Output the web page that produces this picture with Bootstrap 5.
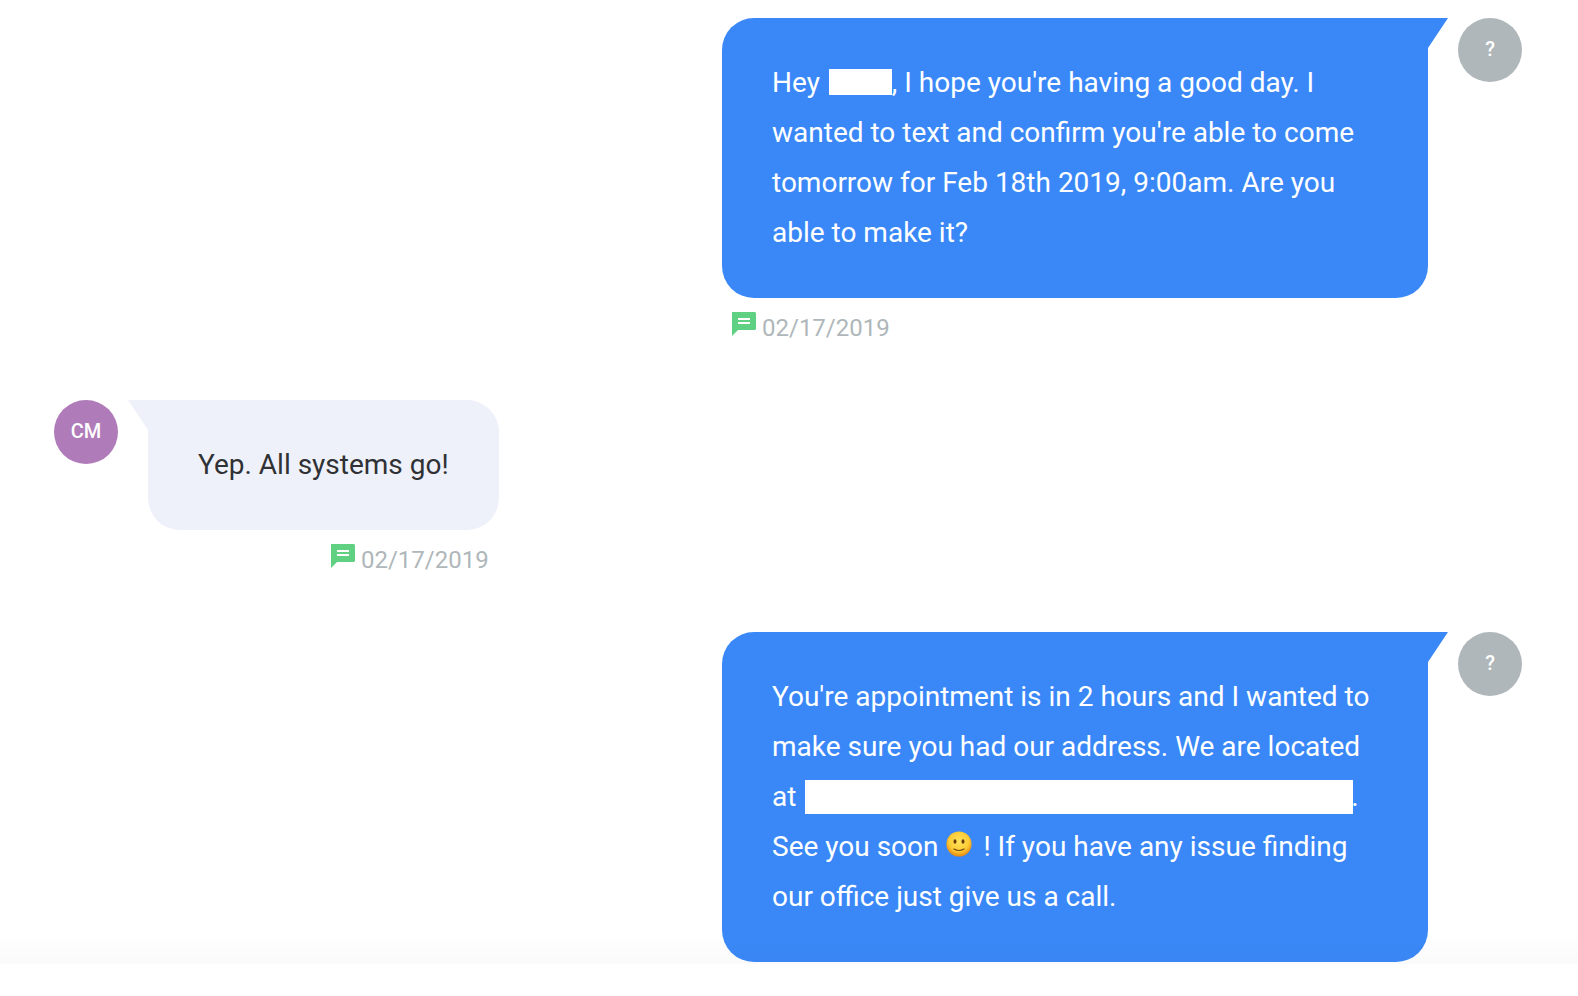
<!DOCTYPE html>
<html lang="en">
<head>
<meta charset="utf-8">
<meta name="viewport" content="width=device-width, initial-scale=1">
<title>Conversation</title>
<link href="https://cdn.jsdelivr.net/npm/bootstrap@5.3.0/dist/css/bootstrap.min.css" rel="stylesheet">
<style>
  body { font-family: Roboto, "Liberation Sans", sans-serif; background: #fff; color: #303135; }
  .thread { position: relative; padding: 18px 56px 0 54px; gap: 52px; min-height: 0; }
  /* faint shade where the thread meets the bottom edge */
  .thread::after { content: ""; position: absolute; left: 0; right: 0; bottom: 0; height: 32px; background: linear-gradient(rgba(0,0,0,0), rgba(0,0,0,.02)); }
  .thread-foot { height: 32px; }
  .message { gap: 30px; }
  .message-body { max-width: calc(50% - 28px); }
  .bubble { position: relative; padding: 40px 50px; font-size: 28px; line-height: 50px; border-radius: 32px; }
  .bubble::before { content: ""; position: absolute; top: 0; width: 20px; height: 30px; }
  .bubble-sent { background: #3a88f8; color: #fff; border-top-right-radius: 0; }
  .bubble-sent::before { left: 100%; background: #3a88f8; clip-path: polygon(0 0, 100% 0, 0 100%); }
  .bubble-received { background: #eef1f9; border-top-left-radius: 0; }
  .bubble-received::before { right: 100%; background: #eef1f9; clip-path: polygon(0 0, 100% 0, 100% 100%); }
  .avatar { width: 64px; height: 64px; padding-bottom: 2px; font-size: 20px; line-height: 24px; font-weight: 500; color: #fff; }
  .avatar-unknown { background: #afb7ba; }
  .avatar-cm { background: #b07bb9; }
  .meta { margin-top: 10px; padding: 0 10px; gap: 6px; font-size: 24px; line-height: 40px; color: #afb7ba; }
  .meta svg { margin-top: 4px; }
  .redacted { display: inline-block; background: #fff; margin-left: 2px; }
  .redacted-name { width: 63px; height: 26px; vertical-align: -3px; }
  .redacted-address { width: 548px; height: 34px; margin-right: -2px; vertical-align: -8px; }
  .emoji { display: inline-block; vertical-align: -1px; margin: 0 4px 0 1px; }
</style>
</head>
<body>
<div class="vh-100 d-flex flex-column overflow-hidden">
  <main class="thread flex-grow-1 d-flex flex-column overflow-hidden">

    <article class="message d-flex flex-shrink-0 justify-content-end align-items-start">
      <div class="message-body">
        <p class="bubble bubble-sent mb-0">Hey <span class="redacted redacted-name"></span>, I hope you're having a good day. I wanted to text and confirm you're able to come tomorrow for Feb 18th 2019, 9:00am. Are you able to make it?</p>
        <div class="meta d-flex align-items-start">
          <svg width="24" height="24" viewBox="0 0 24 24" aria-hidden="true"><path fill="#60d083" d="M0 0h23l1 1v16l-1 1H6l-6 6z"/><path fill="#fff" d="M6 6h12v2H6zM6 10h12v2H6z"/></svg>
          <time datetime="2019-02-17">02/17/2019</time>
        </div>
      </div>
      <div class="avatar avatar-unknown rounded-circle d-flex flex-shrink-0 align-items-center justify-content-center">?</div>
    </article>

    <article class="message d-flex flex-shrink-0 align-items-start">
      <div class="avatar avatar-cm rounded-circle d-flex flex-shrink-0 align-items-center justify-content-center">CM</div>
      <div class="message-body">
        <p class="bubble bubble-received mb-0">Yep. All systems go!</p>
        <div class="meta d-flex align-items-start justify-content-end">
          <svg width="24" height="24" viewBox="0 0 24 24" aria-hidden="true"><path fill="#60d083" d="M0 0h23l1 1v16l-1 1H6l-6 6z"/><path fill="#fff" d="M6 6h12v2H6zM6 10h12v2H6z"/></svg>
          <time datetime="2019-02-17">02/17/2019</time>
        </div>
      </div>
    </article>

    <article class="message d-flex flex-shrink-0 justify-content-end align-items-start">
      <div class="message-body">
        <p class="bubble bubble-sent mb-0">You're appointment is in 2 hours and I wanted to make sure you had our address. We are located at <span class="redacted redacted-address"></span>. See you soon <svg class="emoji" width="26" height="26" viewBox="0 0 26 26" role="img" aria-label="slightly smiling face"><defs><radialGradient id="face" cx=".5" cy=".4" r=".6"><stop offset="0" stop-color="#ffe45c"/><stop offset=".65" stop-color="#fdcb35"/><stop offset="1" stop-color="#e5850f"/></radialGradient></defs><circle cx="13" cy="13" r="12.6" fill="url(#face)"/><ellipse cx="9" cy="10.5" rx="1.5" ry="2.2" fill="#6b3c0b"/><ellipse cx="17" cy="10.5" rx="1.5" ry="2.2" fill="#6b3c0b"/><path d="M8 18q5 3 10 0" fill="none" stroke="#7c470c" stroke-width="1.2" stroke-linecap="round"/></svg> ! If you have any issue finding our office just give us a call.</p>
      </div>
      <div class="avatar avatar-unknown rounded-circle d-flex flex-shrink-0 align-items-center justify-content-center">?</div>
    </article>

  </main>
  <div class="thread-foot flex-shrink-0"></div>
</div>
</body>
</html>
